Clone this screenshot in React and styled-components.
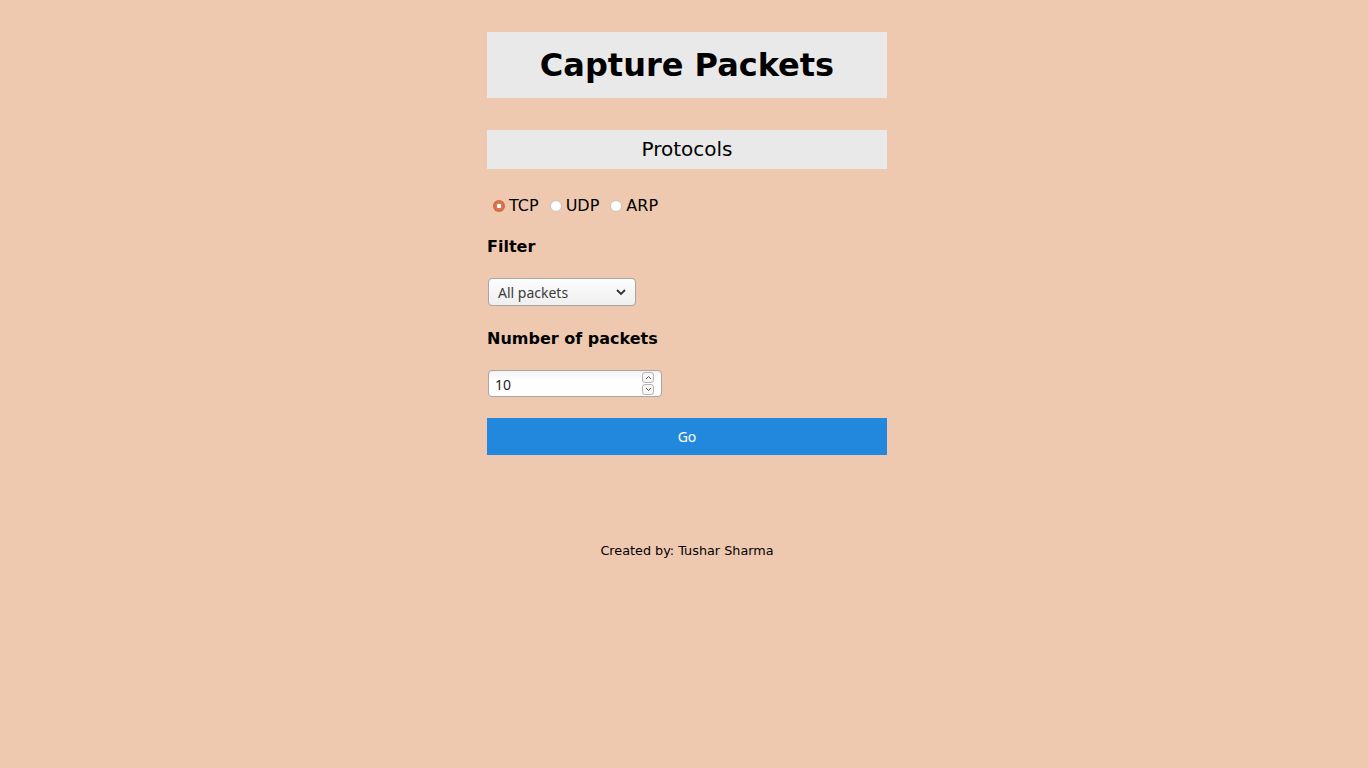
import React, { useState } from "react";
import styled, { createGlobalStyle } from "styled-components";

const Global = createGlobalStyle`
  html, body {
    margin: 0;
    padding: 0;
    background: #eec9b0;
    font-family: "DejaVu Sans", sans-serif;
    color: #000;
  }
`;

const Page = styled.div`
  min-height: 768px;
  padding: 32px 0 0 6px;
  box-sizing: border-box;
`;

const Main = styled.div`
  width: 400px;
  margin: 0 auto;
  display: flex;
  flex-direction: column;
`;

const TitleBox = styled.div`
  background: #e9e9e9;
  height: 66px;
  display: flex;
  align-items: center;
  justify-content: center;
`;

const Title = styled.h1`
  margin: 0;
  font-size: 32px;
  font-weight: bold;
`;

const SectionBox = styled.div`
  background: #e9e9e9;
  height: 39px;
  margin-top: 32px;
  padding-bottom: 2px;
  box-sizing: border-box;
  display: flex;
  align-items: center;
  justify-content: center;
  font-size: 20px;
`;

const RadioRow = styled.div`
  display: flex;
  align-items: center;
  margin-top: 27px;
  padding-left: 6px;
  height: 19px;
  font-size: 16px;
`;

const RadioLabel = styled.label`
  display: flex;
  align-items: center;
  margin-right: 11px;
  cursor: pointer;
`;

const Radio = styled.input`
  appearance: none;
  width: 12px;
  height: 12px;
  margin: 0 4px 0 0;
  border-radius: 50%;
  background: #fff;
  border: 1px solid #c9c0b8;
  box-sizing: border-box;
  &:checked {
    border: none;
    background: radial-gradient(circle, #fff 0 2px, #e07a55 2.5px, #c4572e 100%);
  }
`;

const Label = styled.div`
  font-size: 16px;
  font-weight: bold;
  margin-top: ${(p) => p.$top}px;
  line-height: 19px;
`;

const SelectWrap = styled.div`
  position: relative;
  width: 148px;
  height: 28px;
  margin-top: 22px;
  margin-left: 1px;
`;

const Select = styled.select`
  appearance: none;
  width: 100%;
  height: 100%;
  border: 1px solid #a9a5a2;
  border-radius: 4px;
  background: linear-gradient(#fdfdfd, #efefef);
  font-family: "Noto Sans", "Open Sans", sans-serif;
  font-size: 14px;
  color: #3c3c3c;
  padding: 0 0 0 9px;
  box-sizing: border-box;
  outline: none;
`;

const Chevron = styled.svg`
  position: absolute;
  right: 9px;
  top: 10px;
  pointer-events: none;
`;

const NumberBox = styled.div`
  display: flex;
  align-items: center;
  width: 174px;
  height: 27px;
  margin-top: 22px;
  margin-left: 1px;
  border: 1px solid #a9a5a2;
  border-radius: 4px;
  background: linear-gradient(#f3f3f3, #fff 40%);
  box-sizing: border-box;
`;

const NumberInput = styled.input`
  flex: 1;
  min-width: 0;
  border: none;
  background: transparent;
  font-family: "Noto Sans", "Open Sans", sans-serif;
  font-size: 14px;
  color: #222;
  padding: 1px 0 0 6px;
  outline: none;
  -moz-appearance: textfield;
  &::-webkit-inner-spin-button,
  &::-webkit-outer-spin-button {
    -webkit-appearance: none;
    margin: 0;
  }
`;

const Spin = styled.div`
  display: flex;
  flex-direction: column;
  gap: 1px;
  margin-right: 7px;
`;

const SpinBtn = styled.button`
  width: 12px;
  height: 11px;
  padding: 0;
  border: 1px solid #b9b4b0;
  border-radius: 3px;
  background: #f6f6f6;
  display: flex;
  align-items: center;
  justify-content: center;
`;

const GoButton = styled.button`
  margin-top: 21px;
  height: 37px;
  border: none;
  background: #2188dd;
  color: #fff;
  font-family: "Noto Sans", "Open Sans", sans-serif;
  font-size: 14px;
  cursor: pointer;
`;

const Footer = styled.div`
  margin-top: 88px;
  text-align: center;
  font-size: 12.8px;
`;

const protocols = ["TCP", "UDP", "ARP"];

export default function App() {
  const [proto, setProto] = useState("TCP");
  const [count, setCount] = useState(10);
  return (
    <Page>
      <Global />
      <Main>
        <TitleBox>
          <Title>Capture Packets</Title>
        </TitleBox>
        <SectionBox>Protocols</SectionBox>
        <RadioRow>
          {protocols.map((p) => (
            <RadioLabel key={p}>
              <Radio
                type="radio"
                name="proto"
                checked={proto === p}
                onChange={() => setProto(p)}
              />
              {p}
            </RadioLabel>
          ))}
        </RadioRow>
        <Label $top={22}>Filter</Label>
        <SelectWrap>
          <Select defaultValue="all">
            <option value="all">All packets</option>
          </Select>
          <Chevron width="12" height="8" viewBox="0 0 12 8">
            <path d="M2 2 L6 6 L10 2" fill="none" stroke="#333" strokeWidth="1.8" />
          </Chevron>
        </SelectWrap>
        <Label $top={23}>Number of packets</Label>
        <NumberBox>
          <NumberInput
            type="number"
            value={count}
            onChange={(e) => setCount(e.target.value)}
          />
          <Spin>
            <SpinBtn onClick={() => setCount(Number(count) + 1)}>
              <svg width="7" height="5" viewBox="0 0 7 5">
                <path d="M1 4 L3.5 1.5 L6 4" fill="none" stroke="#555" strokeWidth="1" />
              </svg>
            </SpinBtn>
            <SpinBtn onClick={() => setCount(Number(count) - 1)}>
              <svg width="7" height="5" viewBox="0 0 7 5">
                <path d="M1 1 L3.5 3.5 L6 1" fill="none" stroke="#555" strokeWidth="1" />
              </svg>
            </SpinBtn>
          </Spin>
        </NumberBox>
        <GoButton>Go</GoButton>
        <Footer>Created by: Tushar Sharma</Footer>
      </Main>
    </Page>
  );
}
